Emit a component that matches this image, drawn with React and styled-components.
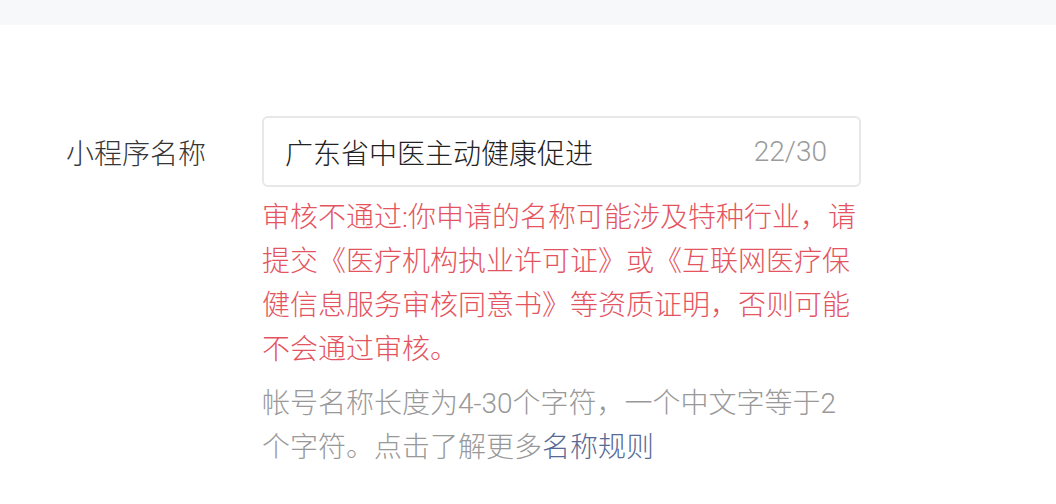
import React from 'react';
import styled, { createGlobalStyle } from 'styled-components';

const GlobalStyle = createGlobalStyle`
  html, body {
    margin: 0;
    padding: 0;
    background: #ffffff;
  }
  body {
    font-family: Roboto, "Noto Sans CJK SC", sans-serif;
    font-weight: 300;
    -webkit-font-smoothing: antialiased;
  }
`;

const StyledPage = styled.div`
  width: 1056px;
  height: 504px;
  overflow: hidden;
  background: #ffffff;

  .top-bar {
    height: 25px;
    background-color: #f7f8fa;
  }

  .form {
    padding: 91px 0 0 66px;
  }
`;

const StyledField = styled.div`
  display: grid;
  grid-template-columns: 196px 599px;
  align-items: start;

  .field-label {
    height: 71px;
    display: flex;
    align-items: center;
    font-size: 28px;
    color: #353535;
    margin: 0;
  }

  .field-body {
    display: flex;
    flex-direction: column;
  }
`;

const StyledInput = styled.div`
  box-sizing: border-box;
  height: 71px;
  display: flex;
  align-items: center;
  justify-content: space-between;
  padding: 0 32px 0 21px;
  border: 2px solid #e7e7ea;
  border-radius: 6px;
  font-size: 28px;

  .input-value {
    color: #222222;
  }

  .input-count {
    color: #9b9b9b;
  }
`;

const StyledTip = styled.p`
  margin: ${props => (props.$warn ? '9px' : '10px')} 0 0;
  font-size: 28px;
  line-height: 44px;
  color: ${props => (props.$warn ? '#e4545f' : '#999999')};

  a {
    color: #576b95;
    text-decoration: none;
  }
`;

const App = () => (
  <StyledPage>
    <GlobalStyle />
    <div className="top-bar" />
    <div className="form">
      <StyledField>
        <p className="field-label">小程序名称</p>
        <div className="field-body">
          <StyledInput>
            <span className="input-value">广东省中医主动健康促进</span>
            <span className="input-count">22/30</span>
          </StyledInput>
          <StyledTip $warn>
            审核不通过:你申请的名称可能涉及特种行业，请提交《医疗机构执业许可证》或《互联网医疗保健信息服务审核同意书》等资质证明，否则可能不会通过审核。
          </StyledTip>
          <StyledTip>
            帐号名称长度为4-30个字符，一个中文字等于2个字符。点击了解更多<a href="#rules">名称规则</a>
          </StyledTip>
        </div>
      </StyledField>
    </div>
  </StyledPage>
);

export default App;
